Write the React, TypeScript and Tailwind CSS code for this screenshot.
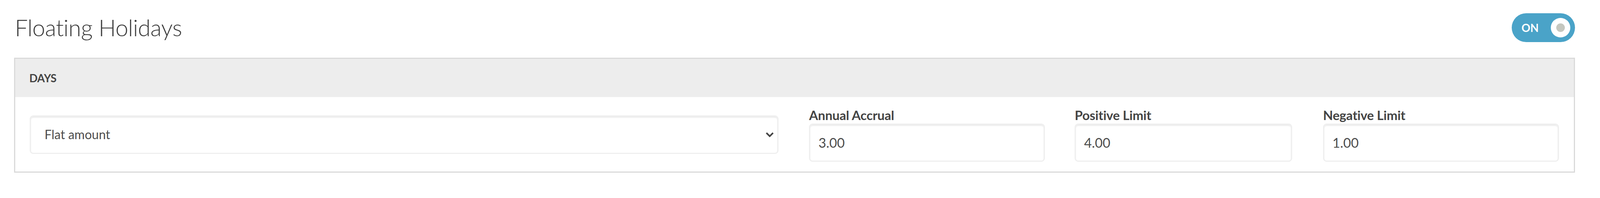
import React from "react";

function Field({ label, value, width, ml }: { label: string; value: string; width: string; ml: string }) {
  return (
    <div className={`flex flex-col ${width} ${ml}`}>
      <div className="text-[33px] font-bold text-[#444444] leading-[40px] tracking-[-0.2px]">{label}</div>
      <div className="mt-[2px] h-[98px] rounded-[9px] border-[3px] border-[#efefef] bg-white shadow-[inset_0_3px_3px_rgba(0,0,0,0.08)] flex items-center pl-[21px]">
        <span className="text-[34px] text-[#4d4d4d] leading-none">{value}</span>
      </div>
    </div>
  );
}

export default function App() {
  return (
    <div className="w-full bg-white pl-[36px] pr-[64px] pt-[34px] pb-[65px]" style={{ fontFamily: "Lato, 'Open Sans', sans-serif" }}>
      <div className="flex items-center justify-between h-[74px]">
        <h1 className="text-[59px] font-light leading-[74px] text-[#3b3b3b] tracking-[-0.5px] pl-[2px]">Floating Holidays</h1>
        <div className="w-[162px] h-[74px] rounded-full bg-[#4aa3c8] flex items-center justify-between pl-[25px] pr-[12px]">
          <span className="text-[28px] font-bold text-white leading-none">ON</span>
          <div className="w-[50px] h-[50px] rounded-full bg-white flex items-center justify-center">
            <div className="w-[22px] h-[22px] rounded-full bg-[#c5c7bf]" />
          </div>
        </div>
      </div>
      <div className="mt-[40px] border-[3px] border-[#dadada]">
        <div className="h-[98px] bg-[#ededed] flex items-center pl-[36px]">
          <span className="text-[28px] font-bold text-[#444444] leading-none tracking-[-0.3px]">DAYS</span>
        </div>
        <div className="flex items-center pl-[37px] pr-[38px] pt-[26px] pb-[25px]">
          <div className="w-[1979px] h-[99px] rounded-[9px] border-[3px] border-[#efefef] bg-white shadow-[inset_0_3px_3px_rgba(0,0,0,0.08)] flex items-center justify-between pl-[35px] pr-[9px]">
            <span className="text-[32px] text-[#4d4d4d] leading-none">Flat amount</span>
            <svg width="21" height="13" viewBox="0 0 21 13" fill="none">
              <path d="M2 2 L10.5 10.5 L19 2" stroke="#444444" strokeWidth="4" strokeLinecap="butt" strokeLinejoin="miter" />
            </svg>
          </div>
          <Field label="Annual Accrual" value="3.00" width="w-[624px]" ml="ml-[78px]" />
          <Field label="Positive Limit" value="4.00" width="w-[575px]" ml="ml-[76px]" />
          <Field label="Negative Limit" value="1.00" width="w-[624px]" ml="ml-[79px]" />
        </div>
      </div>
    </div>
  );
}
